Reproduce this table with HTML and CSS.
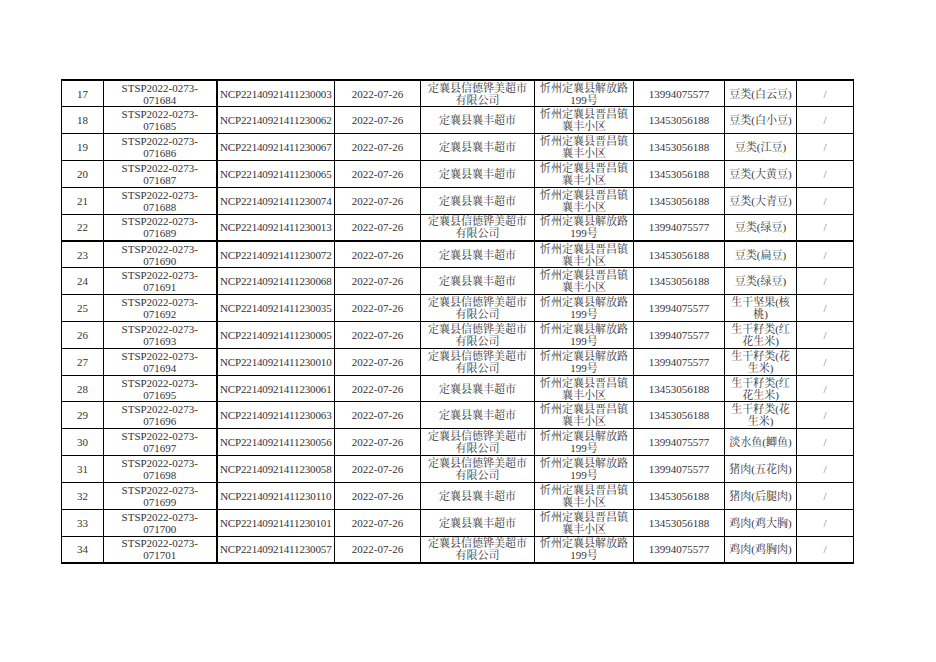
FILE: index.html
```html
<!DOCTYPE html>
<html lang="zh-CN">
<head>
<meta charset="utf-8">
<title>抽检信息</title>
<link rel="stylesheet" href="styles.css">
</head>
<body>
<table class="sheet">
<colgroup>
<col class="c-no"><col class="c-code"><col class="c-ncp"><col class="c-date"><col class="c-shop"><col class="c-addr"><col class="c-tel"><col class="c-food"><col class="c-note">
</colgroup>
<tbody>
<tr><td>17</td><td>STSP2022-0273-<br>071684</td><td class="ncp">NCP22140921411230003</td><td>2022-07-26</td><td>定襄县信德铧美超市有限公司</td><td>忻州定襄县解放路199号</td><td>13994075577</td><td>豆类(白云豆)</td><td class="na">/</td></tr>
<tr><td>18</td><td>STSP2022-0273-<br>071685</td><td class="ncp">NCP22140921411230062</td><td>2022-07-26</td><td>定襄县襄丰超市</td><td>忻州定襄县晋昌镇襄丰小区</td><td>13453056188</td><td>豆类(白小豆)</td><td class="na">/</td></tr>
<tr><td>19</td><td>STSP2022-0273-<br>071686</td><td class="ncp">NCP22140921411230067</td><td>2022-07-26</td><td>定襄县襄丰超市</td><td>忻州定襄县晋昌镇襄丰小区</td><td>13453056188</td><td>豆类(江豆)</td><td class="na">/</td></tr>
<tr><td>20</td><td>STSP2022-0273-<br>071687</td><td class="ncp">NCP22140921411230065</td><td>2022-07-26</td><td>定襄县襄丰超市</td><td>忻州定襄县晋昌镇襄丰小区</td><td>13453056188</td><td>豆类(大黄豆)</td><td class="na">/</td></tr>
<tr><td>21</td><td>STSP2022-0273-<br>071688</td><td class="ncp">NCP22140921411230074</td><td>2022-07-26</td><td>定襄县襄丰超市</td><td>忻州定襄县晋昌镇襄丰小区</td><td>13453056188</td><td>豆类(大青豆)</td><td class="na">/</td></tr>
<tr class="break"><td>22</td><td>STSP2022-0273-<br>071689</td><td class="ncp">NCP22140921411230013</td><td>2022-07-26</td><td>定襄县信德铧美超市有限公司</td><td>忻州定襄县解放路199号</td><td>13994075577</td><td>豆类(绿豆)</td><td class="na">/</td></tr>
<tr><td>23</td><td>STSP2022-0273-<br>071690</td><td class="ncp">NCP22140921411230072</td><td>2022-07-26</td><td>定襄县襄丰超市</td><td>忻州定襄县晋昌镇襄丰小区</td><td>13453056188</td><td>豆类(扁豆)</td><td class="na">/</td></tr>
<tr><td>24</td><td>STSP2022-0273-<br>071691</td><td class="ncp">NCP22140921411230068</td><td>2022-07-26</td><td>定襄县襄丰超市</td><td>忻州定襄县晋昌镇襄丰小区</td><td>13453056188</td><td>豆类(绿豆)</td><td class="na">/</td></tr>
<tr><td>25</td><td>STSP2022-0273-<br>071692</td><td class="ncp">NCP22140921411230035</td><td>2022-07-26</td><td>定襄县信德铧美超市有限公司</td><td>忻州定襄县解放路199号</td><td>13994075577</td><td>生干坚果(核桃)</td><td class="na">/</td></tr>
<tr><td>26</td><td>STSP2022-0273-<br>071693</td><td class="ncp">NCP22140921411230005</td><td>2022-07-26</td><td>定襄县信德铧美超市有限公司</td><td>忻州定襄县解放路199号</td><td>13994075577</td><td>生干籽类(红花生米)</td><td class="na">/</td></tr>
<tr><td>27</td><td>STSP2022-0273-<br>071694</td><td class="ncp">NCP22140921411230010</td><td>2022-07-26</td><td>定襄县信德铧美超市有限公司</td><td>忻州定襄县解放路199号</td><td>13994075577</td><td>生干籽类(花生米)</td><td class="na">/</td></tr>
<tr><td>28</td><td>STSP2022-0273-<br>071695</td><td class="ncp">NCP22140921411230061</td><td>2022-07-26</td><td>定襄县襄丰超市</td><td>忻州定襄县晋昌镇襄丰小区</td><td>13453056188</td><td>生干籽类(红花生米)</td><td class="na">/</td></tr>
<tr><td>29</td><td>STSP2022-0273-<br>071696</td><td class="ncp">NCP22140921411230063</td><td>2022-07-26</td><td>定襄县襄丰超市</td><td>忻州定襄县晋昌镇襄丰小区</td><td>13453056188</td><td>生干籽类(花生米)</td><td class="na">/</td></tr>
<tr><td>30</td><td>STSP2022-0273-<br>071697</td><td class="ncp">NCP22140921411230056</td><td>2022-07-26</td><td>定襄县信德铧美超市有限公司</td><td>忻州定襄县解放路199号</td><td>13994075577</td><td>淡水鱼(鲫鱼)</td><td class="na">/</td></tr>
<tr><td>31</td><td>STSP2022-0273-<br>071698</td><td class="ncp">NCP22140921411230058</td><td>2022-07-26</td><td>定襄县信德铧美超市有限公司</td><td>忻州定襄县解放路199号</td><td>13994075577</td><td>猪肉(五花肉)</td><td class="na">/</td></tr>
<tr><td>32</td><td>STSP2022-0273-<br>071699</td><td class="ncp">NCP22140921411230110</td><td>2022-07-26</td><td>定襄县襄丰超市</td><td>忻州定襄县晋昌镇襄丰小区</td><td>13453056188</td><td>猪肉(后腿肉)</td><td class="na">/</td></tr>
<tr><td>33</td><td>STSP2022-0273-<br>071700</td><td class="ncp">NCP22140921411230101</td><td>2022-07-26</td><td>定襄县襄丰超市</td><td>忻州定襄县晋昌镇襄丰小区</td><td>13453056188</td><td>鸡肉(鸡大胸)</td><td class="na">/</td></tr>
<tr><td>34</td><td>STSP2022-0273-<br>071701</td><td class="ncp">NCP22140921411230057</td><td>2022-07-26</td><td>定襄县信德铧美超市有限公司</td><td>忻州定襄县解放路199号</td><td>13994075577</td><td>鸡肉(鸡胸肉)</td><td class="na">/</td></tr>
</tbody>
</table>
</body>
</html>
```

FILE: styles.css
```css
html, body {
  margin: 0;
  padding: 0;
  background: #ffffff;
}

body {
  padding: 79px 0 0 61px;
  font-family: "Liberation Serif", "Noto Serif CJK SC", "Noto Sans CJK SC", serif;
  font-size: 11px;
  color: #333333;
}

.sheet {
  border-collapse: collapse;
  table-layout: fixed;
  width: 792px;
  border-top: 2px solid #000;
  border-bottom: 2px solid #000;
  border-left: 1px solid #000;
  border-right: 1px solid #000;
}

.c-no { width: 42px; }
.c-code { width: 113px; }
.c-ncp { width: 118px; }
.c-date { width: 86px; }
.c-shop { width: 114px; }
.c-addr { width: 99px; }
.c-tel { width: 91px; }
.c-food { width: 72px; }
.c-note { width: 57px; }

.sheet tr {
  height: 26.83px;
}

.sheet td {
  border: 1px solid #000;
  padding: 0 2px;
  text-align: center;
  vertical-align: middle;
  line-height: 12px;
  overflow: hidden;
}

.sheet td:nth-child(2) {
  border-right: 2px solid #000;
}

.sheet td.ncp {
  padding: 0;
  white-space: nowrap;
  letter-spacing: -0.15px;
}

.sheet tr.break td {
  border-bottom: 2px solid #000;
}

.sheet td.na {
  color: #777777;
}
```
